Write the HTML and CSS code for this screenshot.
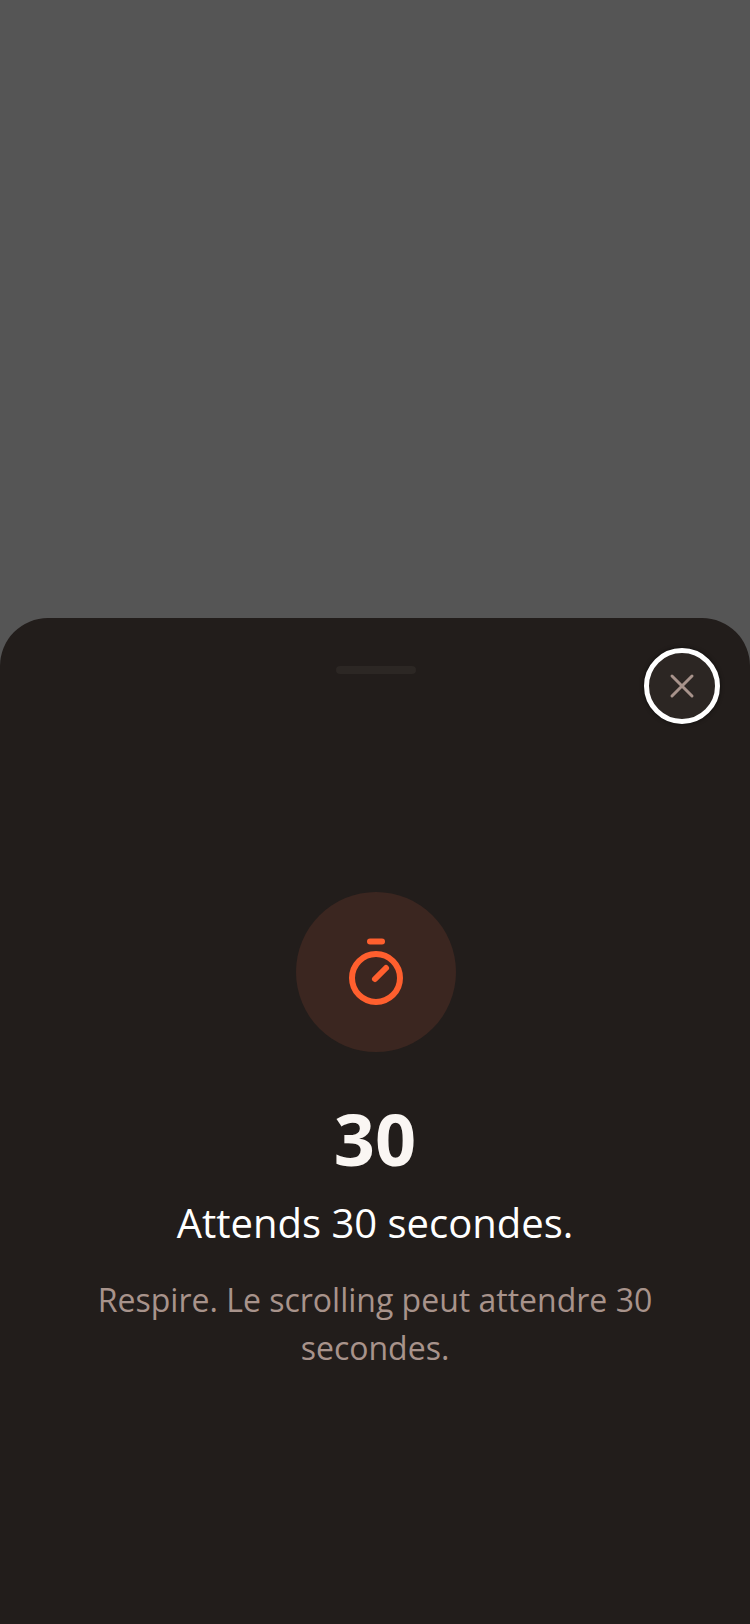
FILE: index.html
```html
<!DOCTYPE html>
<html>
<head>
    <title>Attends 30 secondes</title>
    <link rel="stylesheet" href="styles.css">
</head>
<body>
    <div class="screen">
        <div class="sheet">
            <div class="handle"></div>
            <button class="close" aria-label="Fermer">
                <svg width="28" height="28" viewBox="0 0 28 28" fill="none" stroke="#a8938b" stroke-width="3" stroke-linecap="round">
                    <path d="M4 4L24 24M24 4L4 24"/>
                </svg>
            </button>
            <div class="content">
                <div class="timer">
                    <svg width="64" height="72" viewBox="0 0 64 72" fill="none" stroke="#ff5f2e" stroke-width="6" stroke-linecap="round">
                        <path d="M26 5.500H38"/>
                        <circle cx="32" cy="42" r="24"/>
                        <path d="M31 43L42 32"/>
                    </svg>
                </div>
                <div class="count">30</div>
                <h1 class="title">Attends 30 secondes.</h1>
                <p class="message">Respire. Le scrolling peut attendre 30 secondes.</p>
            </div>
        </div>
    </div>
</body>
</html>
```

FILE: styles.css
```css
* {
    box-sizing: border-box;
}

body {
    margin: 0;
    font-family: "Open Sans", sans-serif;
    background-color: #555555;
}

.screen {
    height: 1624px;
    display: flex;
    flex-direction: column;
    justify-content: flex-end;
}

.sheet {
    position: relative;
    height: 1006px;
    padding-top: 48px;
    background-color: #221d1b;
    border-radius: 48px 48px 0 0;
}

.handle {
    width: 80px;
    height: 8px;
    margin: 0 auto;
    transform: translateX(1px);
    background-color: #2c2724;
    border-radius: 4px;
}

.close {
    position: absolute;
    top: 30px;
    right: 30px;
    width: 76px;
    height: 76px;
    padding: 0;
    display: flex;
    align-items: center;
    justify-content: center;
    background-color: #2c2623;
    border: 5px solid #fff;
    border-radius: 50%;
    box-shadow: 0 0 4px rgba(0, 0, 0, 0.6);
}

.content {
    display: flex;
    flex-direction: column;
    align-items: center;
    padding: 218px 90px 0;
    text-align: center;
}

.timer {
    width: 160px;
    height: 160px;
    display: flex;
    align-items: center;
    justify-content: center;
    transform: translateX(1px);
    background-color: #3b2620;
    border-radius: 50%;
}

.count {
    margin-top: 37px;
    font-size: 72px;
    font-weight: 700;
    line-height: 98px;
    color: #faf6f3;
}

.title {
    margin: 8px 0 0;
    font-size: 40px;
    font-weight: 400;
    line-height: 56px;
    color: #fff;
}

.message {
    margin: 25px 0 0;
    font-size: 32px;
    line-height: 48px;
    color: #a8938b;
}
```
